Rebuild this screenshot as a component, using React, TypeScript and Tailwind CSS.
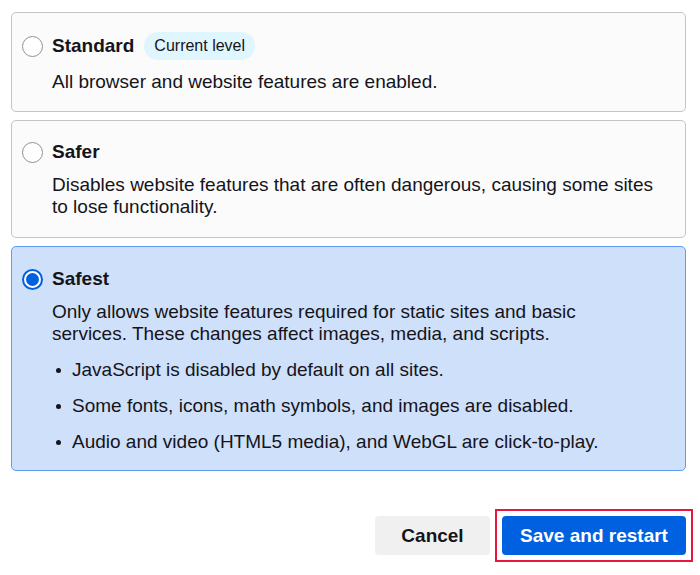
import { useState } from 'react';

type Level = {
  id: string;
  title: string;
  current?: boolean;
  description: string;
  bullets?: string[];
};

const levels: Level[] = [
  {
    id: 'standard',
    title: 'Standard',
    current: true,
    description: 'All browser and website features are enabled.',
  },
  {
    id: 'safer',
    title: 'Safer',
    description:
      'Disables website features that are often dangerous, causing some sites to lose functionality.',
  },
  {
    id: 'safest',
    title: 'Safest',
    description:
      'Only allows website features required for static sites and basic services. These changes affect images, media, and scripts.',
    bullets: [
      'JavaScript is disabled by default on all sites.',
      'Some fonts, icons, math symbols, and images are disabled.',
      'Audio and video (HTML5 media), and WebGL are click-to-play.',
    ],
  },
];

function Radio({ checked }: { checked: boolean }) {
  if (checked) {
    return (
      <span className="flex h-[21px] w-[21px] shrink-0 items-center justify-center rounded-full border-2 border-[#0061e0] bg-white">
        <span className="h-[13px] w-[13px] rounded-full bg-[#0061e0]" />
      </span>
    );
  }
  return <span className="h-[21px] w-[21px] shrink-0 rounded-full border border-[#8f8f9d] bg-white" />;
}

export default function App() {
  const [selected, setSelected] = useState('safest');

  return (
    <div className="min-h-screen bg-white pl-[11px] pr-[14px] pt-[12px] text-[19px] leading-[22px] text-[#15141a] font-['Liberation_Sans',Arial,sans-serif]">
      <div className="flex flex-col gap-[8px]">
        {levels.map((level) => {
          const active = selected === level.id;
          const box = active
            ? 'border-[#5c9cf5] bg-[#cfe0fb] pt-[21px] pb-[17px]'
            : 'border-[#c4c4c4] bg-[#fbfbfb] pt-[20px] pb-[19px]';
          return (
            <div
              key={level.id}
              onClick={() => setSelected(level.id)}
              className={level.current ? 'rounded-[5px] border border-[#c4c4c4] bg-[#fbfbfb] pl-[10px] pr-[20px] pt-[19px] pb-[18px]' : `rounded-[5px] border pl-[10px] pr-[20px] ${box}`}
            >
              <div className="flex items-center">
                <Radio checked={active} />
                <span className="ml-[9px] font-bold">{level.title}</span>
                {level.current && (
                  <span className="ml-[10px] flex h-[28px] items-center rounded-full bg-[#e0f6ff] px-[10px] text-[16px]">
                    Current level
                  </span>
                )}
              </div>
              <p className="mt-[11px] w-[633px] pl-[30px]">{level.description}</p>
              {level.bullets && (
                <ul className="mt-[14px] flex flex-col gap-[14px] pl-[30px]">
                  {level.bullets.map((b) => (
                    <li key={b} className="flex items-center">
                      <span className="ml-[4px] mr-[11px] h-[5px] w-[5px] shrink-0 rounded-full bg-[#15141a]" />
                      {b}
                    </li>
                  ))}
                </ul>
              )}
            </div>
          );
        })}
      </div>

      <div className="mt-[45px] flex justify-end gap-[12px]">
        <button className="h-[39px] w-[115px] rounded-[4px] bg-[#f0f0f0] font-bold text-[#15141a]">
          Cancel
        </button>
        <div className="-m-[7px] border-2 border-[#e5173f] p-[5px]">
          <button className="block h-[39px] w-[184px] rounded-[4px] bg-[#0061e0] font-bold text-white">
            Save and restart
          </button>
        </div>
      </div>
    </div>
  );
}
